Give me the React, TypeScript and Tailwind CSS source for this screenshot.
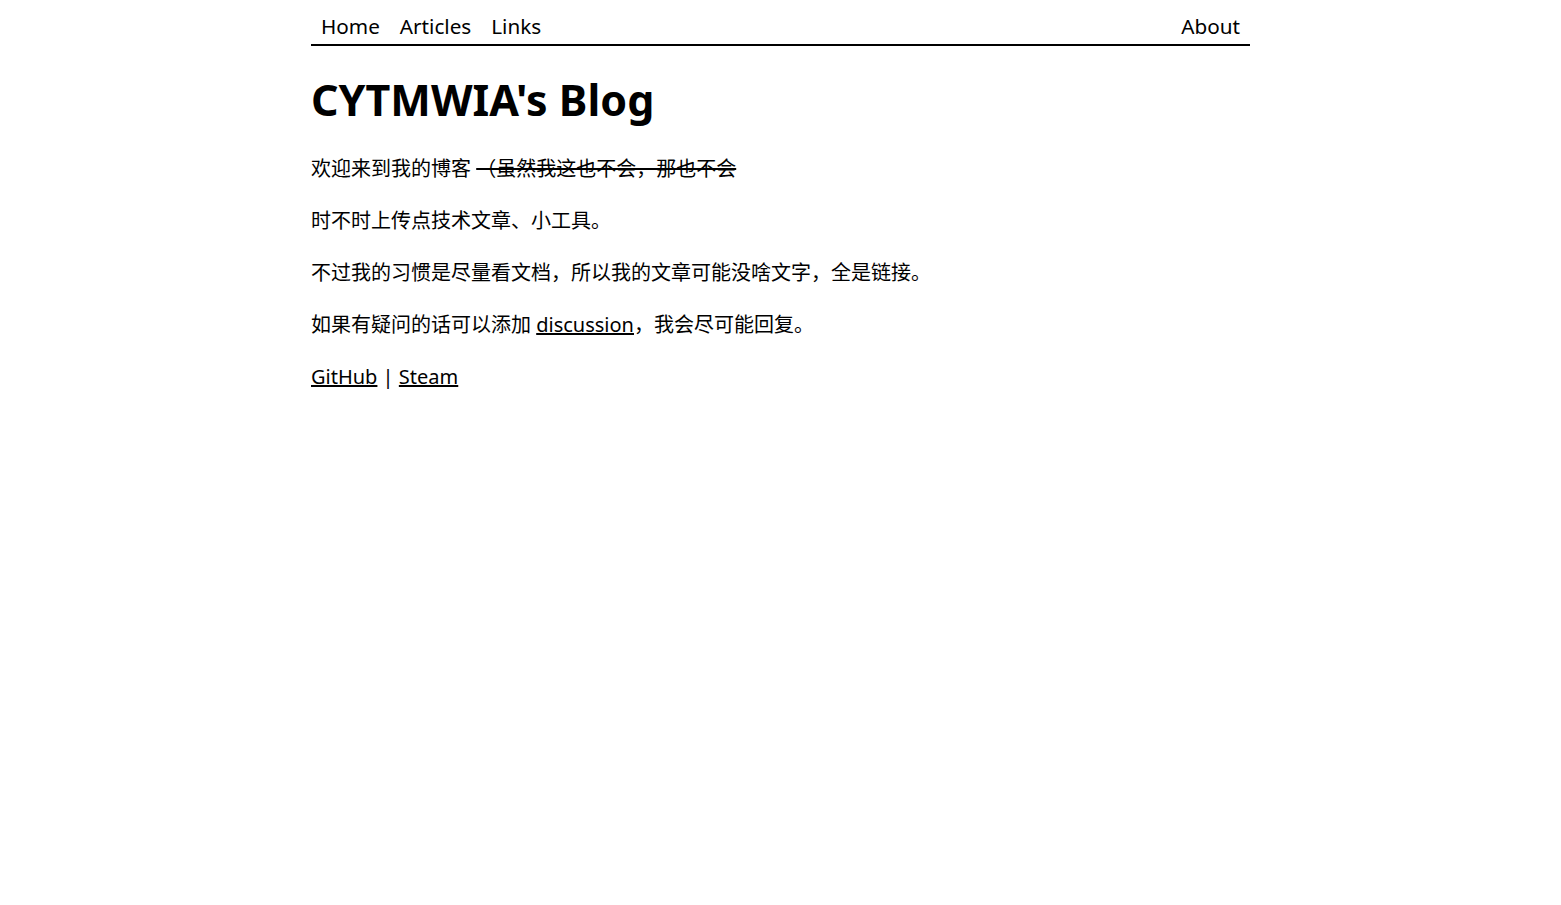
import React from 'react'

const navLink = 'px-[10px] hover:underline'

export default function App() {
  return (
    <div
      className="min-h-screen bg-white text-black text-[20px] leading-[32px]"
      style={{ fontFamily: '"Noto Sans", "Noto Sans CJK SC", sans-serif' }}
    >
      <div className="w-[939px] mx-auto">
        {/* Top navigation */}
        <nav className="flex justify-between border-b-2 border-black pt-[10px] pb-[2px] text-[20.7px]">
          <div className="flex">
            <a href="#" className={navLink}>Home</a>
            <a href="#" className={navLink}>Articles</a>
            <a href="#" className={navLink}>Links</a>
          </div>
          <div className="flex">
            <a href="#" className={navLink}>About</a>
          </div>
        </nav>

        <main>
          <h1 className="text-[43px] leading-[64px] font-bold mt-[22px] mb-[21px]">
            CYTMWIA's Blog
          </h1>
          <div className="flex flex-col gap-[20px]">
            <p>
              欢迎来到我的博客 <del>（虽然我这也不会，那也不会</del>
            </p>
            <p>时不时上传点技术文章、小工具。</p>
            <p>不过我的习惯是尽量看文档，所以我的文章可能没啥文字，全是链接。</p>
            <p>
              如果有疑问的话可以添加 <a href="#" className="underline">discussion</a>，我会尽可能回复。
            </p>
            <p>
              <a href="#" className="underline">GitHub</a> | <a href="#" className="underline">Steam</a>
            </p>
          </div>
        </main>
      </div>
    </div>
  )
}
